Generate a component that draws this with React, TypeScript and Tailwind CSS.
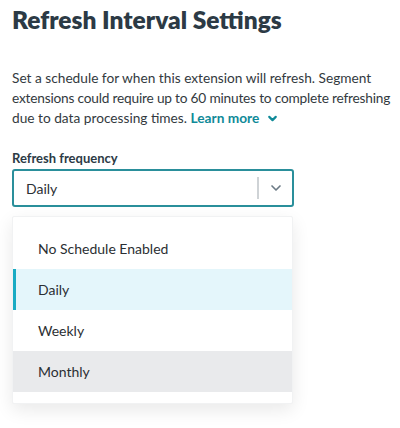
import { ChevronDown } from 'lucide-react';

const options = ['No Schedule Enabled', 'Daily', 'Weekly', 'Monthly'];

export default function App() {
  const selected = 'Daily';
  const hovered = 'Monthly';

  return (
    <div className="w-[400px] h-[428px] bg-white px-3 pt-[5px] font-['Lato',sans-serif] text-[#2b2f33]">
      <h1 className="text-[24.5px] leading-[30px] font-extrabold text-[#2c3a45]">
        Refresh Interval Settings
      </h1>

      <p className="mt-[33px] whitespace-nowrap text-[13.7px] leading-[20px] text-[#333a40]">
        Set a schedule for when this extension will refresh. Segment
        <br />
        <span className="tracking-[-0.2px]">extensions could require up to 60 minutes to complete refreshing</span>
        <br />
        due to data processing times.{' '}
        <a className="font-bold text-[#0f8a98]">Learn more</a>
        <ChevronDown size={13} strokeWidth={4} className="inline-block ml-[7px] -mt-[2px] text-[#0f8a98]" />
      </p>

      <label className="block mt-[21px] text-[13px] leading-[18px] font-bold text-[#2c3a45]">
        Refresh frequency
      </label>

      <div className="mt-[2px] w-[282px]">
        <div className="h-[38px] flex items-center border-2 border-[#2a8f9b] rounded-[3px] bg-white">
          <span className="flex-1 pl-[12px] text-[14px] text-[#2b2f33]">{selected}</span>
          <span className="w-[2px] h-[22px] bg-[#cfd3d6]" />
          <span className="w-[33px] flex justify-center">
            <ChevronDown size={16} strokeWidth={2.5} className="text-[#6b7a85]" />
          </span>
        </div>

        <div className="mt-[9px] w-[281px] bg-white rounded-[2px] pt-[11px] pb-[11px] shadow-[0_6px_18px_rgba(0,0,0,0.09)] border border-[#f1f2f3]">
          {options.map((opt) => {
            const isSel = opt === selected;
            const isHover = opt === hovered;
            return (
              <div
                key={opt}
                className={`h-[41px] flex items-center pl-[22px] text-[14px] text-[#2b2f33] border-l-[3px] ${
                  isSel
                    ? 'bg-[#e4f6fb] border-[#19abc3]'
                    : isHover
                    ? 'bg-[#e9eaec] border-transparent'
                    : 'border-transparent'
                }`}
              >
                {opt}
              </div>
            );
          })}
        </div>
      </div>
    </div>
  );
}
